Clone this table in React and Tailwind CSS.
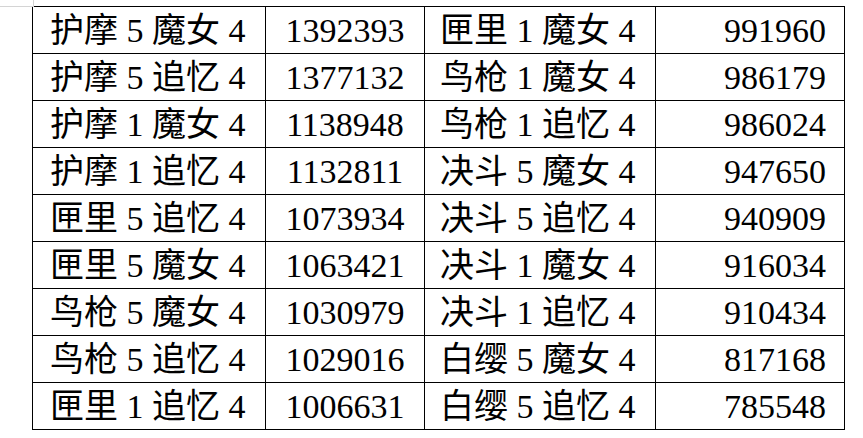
import React from "react";

const rows = [
  ["护摩 5 魔女 4", "1392393", "匣里 1 魔女 4", "991960"],
  ["护摩 5 追忆 4", "1377132", "鸟枪 1 魔女 4", "986179"],
  ["护摩 1 魔女 4", "1138948", "鸟枪 1 追忆 4", "986024"],
  ["护摩 1 追忆 4", "1132811", "决斗 5 魔女 4", "947650"],
  ["匣里 5 追忆 4", "1073934", "决斗 5 追忆 4", "940909"],
  ["匣里 5 魔女 4", "1063421", "决斗 1 魔女 4", "916034"],
  ["鸟枪 5 魔女 4", "1030979", "决斗 1 追忆 4", "910434"],
  ["鸟枪 5 追忆 4", "1029016", "白缨 5 魔女 4", "817168"],
  ["匣里 1 追忆 4", "1006631", "白缨 5 追忆 4", "785548"],
];

const cell = "h-[47px] border-r border-b border-black flex items-center pt-[1px]";

export default function App() {
  return (
    <div
      className="w-[863px] h-[438px] bg-white text-black overflow-hidden"
      style={{ fontFamily: '"Liberation Serif", "Noto Sans CJK SC", serif' }}
    >
      {/* spreadsheet gridline corner */}
      <div className="flex h-[6px]">
        <div className="w-[34px] h-[7px] border-r border-b border-[#d4d4d4]" />
      </div>
      <div className="ml-[32px] w-fit border-l border-t border-black grid grid-cols-[233px_159px_231px_189px] text-[34px] leading-none">
        {rows.map((r, i) => (
          <React.Fragment key={i}>
            <div className={`${cell} pl-[17px]`}>{r[0]}</div>
            <div className={`${cell} justify-center`}>{r[1]}</div>
            <div className={`${cell} pl-[15px]`}>{r[2]}</div>
            <div className={`${cell} justify-end pr-[18px]`}>{r[3]}</div>
          </React.Fragment>
        ))}
      </div>
    </div>
  );
}
